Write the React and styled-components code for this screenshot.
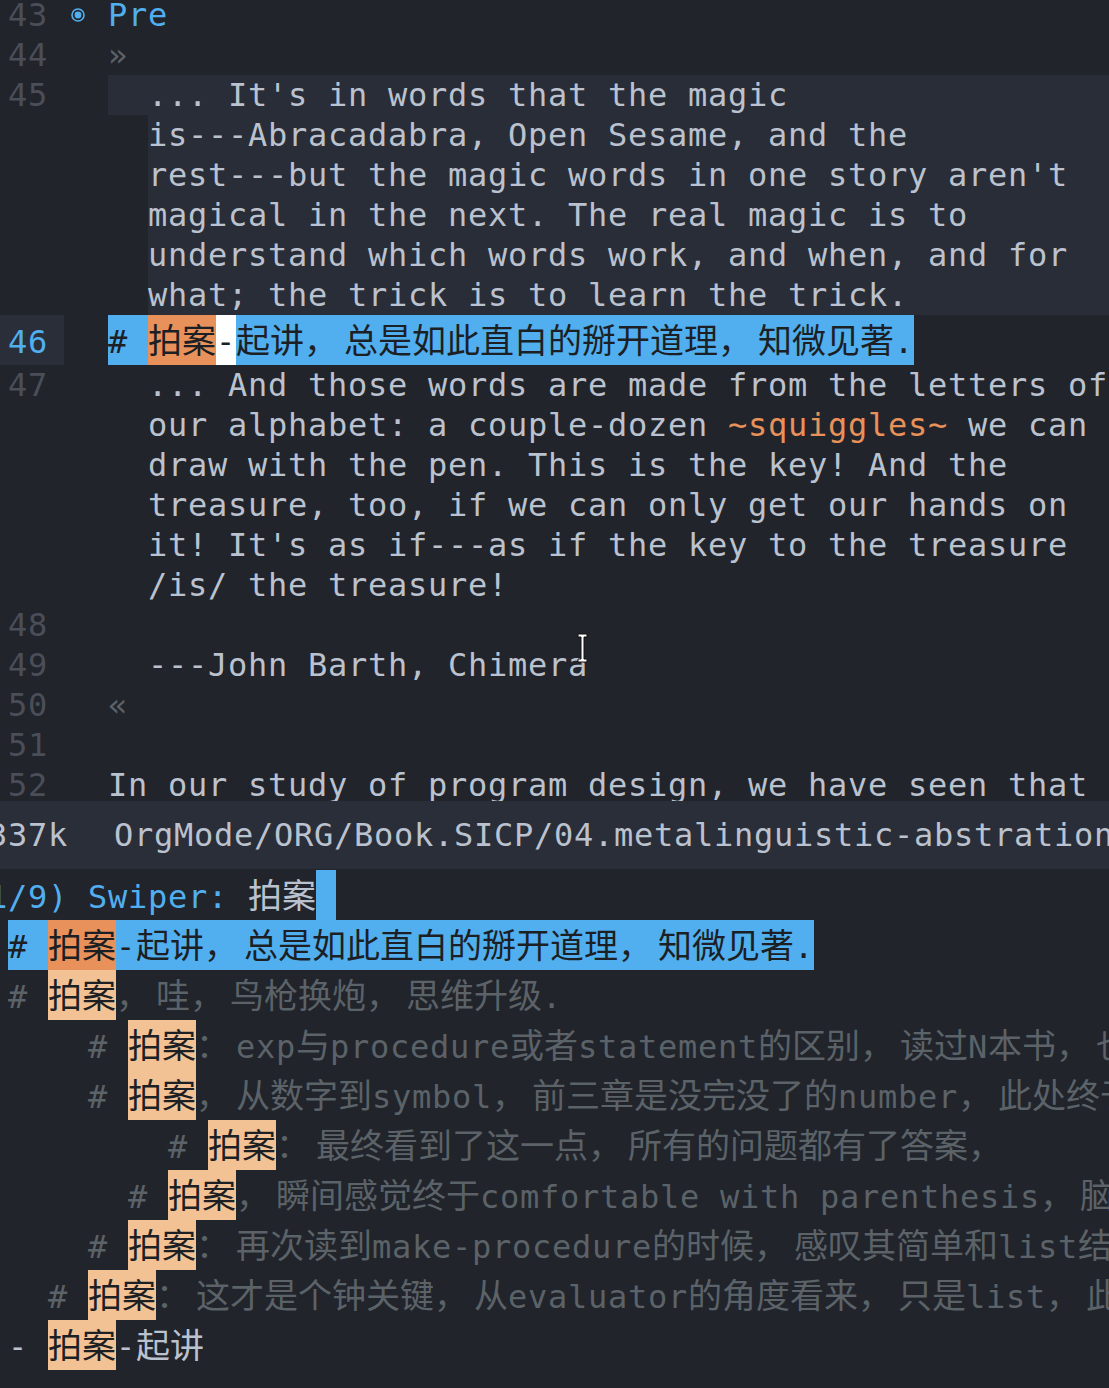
import React from 'react';
import styled, { createGlobalStyle } from 'styled-components';

const bg = '#21242b';
const bgBlock = '#292d37';
const bgModeLine = '#2a2e38';
const fg = '#bbc2cf';
const dim = '#5b6268';
const lineNum = '#4a4e58';
const blue = '#51afef';
const orange = '#e8915a';
const peach = '#f3c294';
const ink = '#1c1f24';

const GlobalStyle = createGlobalStyle`
  html, body {
    margin: 0;
    padding: 0;
    background: ${bg};
    overflow: hidden;
  }
`;

// CJK runs get their own font and size, fullwidth punctuation takes two cells
const CJK_SPLIT = /([\u4e00-\u9fff]+|[\uff0c\uff1a\u3001\u3002])/;
const PUNCT = /^[\uff0c\uff1a\u3001\u3002]$/;

function Mixed({ text }) {
  return text.split(CJK_SPLIT).map((part, i) => {
    if (!part) return null;
    if (PUNCT.test(part)) return <Punct key={i}>{part}</Punct>;
    if (/^[\u4e00-\u9fff]/.test(part)) return <Han key={i}>{part}</Han>;
    return <React.Fragment key={i}>{part}</React.Fragment>;
  });
}

function Bullet() {
  return (
    <BulletCell>
      <svg width="14" height="14" viewBox="0 0 14 14">
        <circle cx="7" cy="7" r="6" fill="none" stroke={blue} strokeWidth="1.6" />
        <circle cx="7" cy="7" r="3.4" fill={blue} />
      </svg>
    </BulletCell>
  );
}

function IBeam() {
  return (
    <MousePointer width="11" height="30" viewBox="0 0 11 30">
      <path
        d="M1 1h9v3H7v22h3v3H1v-3h3V4H1z"
        fill="#fff"
        stroke="#111"
        strokeWidth="1"
      />
    </MousePointer>
  );
}

function BufLine({ num, current, tall, indent = 2, block, children }) {
  return (
    <Row $tall={tall}>
      <Gutter $current={current}>{num}</Gutter>
      <Content $indent={indent}>
        <Inner $block={block}>{children}</Inner>
      </Content>
    </Row>
  );
}

function Candidate({ indent = 0, mark = '#', rest, tone = 'dim' }) {
  return (
    <CandRow $indent={indent}>
      <CandText $tone={tone}>
        {mark}{' '}
        <Match $strong={tone === 'selected'}>
          <Han>拍案</Han>
        </Match>
        <Mixed text={rest} />
      </CandText>
    </CandRow>
  );
}

const quote = [
  'is---Abracadabra, Open Sesame, and the',
  "rest---but the magic words in one story aren't",
  'magical in the next. The real magic is to',
  'understand which words work, and when, and for',
  'what; the trick is to learn the trick.',
];

const candidates = [
  { indent: 0, rest: '，哇，鸟枪换炮，思维升级.' },
  { indent: 4, rest: '：exp与procedure或者statement的区别，读过N本书，也' },
  { indent: 4, rest: '，从数字到symbol，前三章是没完没了的number，此处终于' },
  { indent: 8, rest: '：最终看到了这一点，所有的问题都有了答案，' },
  { indent: 6, rest: '，瞬间感觉终于comfortable with parenthesis，脑' },
  { indent: 4, rest: '：再次读到make-procedure的时候，感叹其简单和list结' },
  { indent: 2, rest: '：这才是个钟关键，从evaluator的角度看来，只是list，此' },
];

export default function App() {
  return (
    <Frame>
      <GlobalStyle />
      <Buffer>
        <BufLine num="43" indent={0}>
          <Bullet />
          <Heading>Pre</Heading>
        </BufLine>
        <BufLine num="44">
          <Faint>»</Faint>
        </BufLine>
        <BufLine num="45" block>
          {"  ... It's in words that the magic"}
        </BufLine>
        {quote.map((t) => (
          <BufLine key={t} indent={4} block>
            {t}
          </BufLine>
        ))}
        <BufLine num="46" current tall>
          <Seg $bg={blue} $color={ink}>
            {'# '}
            <Seg $bg={orange}>
              <Han>拍案</Han>
            </Seg>
            <Seg $bg="#ffffff">-</Seg>
            <Mixed text="起讲，总是如此直白的掰开道理，知微见著." />
          </Seg>
        </BufLine>
        <BufLine num="47">{'  ... And those words are made from the letters of'}</BufLine>
        <BufLine indent={4}>
          {'our alphabet: a couple-dozen '}
          <Verbatim>~squiggles~</Verbatim>
          {' we can'}
        </BufLine>
        <BufLine indent={4}>draw with the pen. This is the key! And the</BufLine>
        <BufLine indent={4}>treasure, too, if we can only get our hands on</BufLine>
        <BufLine indent={4}>{"it! It's as if---as if the key to the treasure"}</BufLine>
        <BufLine indent={4}>/is/ the treasure!</BufLine>
        <BufLine num="48" />
        <BufLine num="49">{'  ---John Barth, Chimera'}</BufLine>
        <BufLine num="50">
          <Faint>«</Faint>
        </BufLine>
        <BufLine num="51" />
        <BufLine num="52">In our study of program design, we have seen that</BufLine>
        <IBeam />
      </Buffer>

      <ModeLine>
        <BufferSize>337k</BufferSize>
        <FilePath>OrgMode/ORG/Book.SICP/04.metalinguistic-abstration.org</FilePath>
      </ModeLine>

      <Minibuffer>
        <PromptRow>
          <PromptLabel>(1/9) Swiper: </PromptLabel>
          <Han>拍案</Han>
          <InputCursor />
        </PromptRow>
        <Candidate tone="selected" rest="-起讲，总是如此直白的掰开道理，知微见著." />
        {candidates.map((c) => (
          <Candidate key={c.rest} indent={c.indent} rest={c.rest} />
        ))}
        <Candidate tone="plain" mark="-" rest="-起讲" />
      </Minibuffer>
    </Frame>
  );
}

const Frame = styled.div`
  width: 1109px;
  height: 1388px;
  display: flex;
  flex-direction: column;
  overflow: hidden;
  background: ${bg};
  color: ${fg};
  font-family: 'DejaVu Sans Mono', 'Noto Sans CJK SC', monospace;
  font-size: 32px;
  letter-spacing: 0.734px;
`;

const Buffer = styled.div`
  position: relative;
  flex: none;
  height: 806px;
  margin-top: -5px;
  overflow: hidden;
`;

const Row = styled.div`
  display: flex;
  height: ${(p) => (p.$tall ? 50 : 40)}px;
  line-height: ${(p) => (p.$tall ? 54 : 40)}px;
`;

const Gutter = styled.div`
  flex: none;
  box-sizing: border-box;
  width: 64px;
  margin-right: 4px;
  padding-right: 16px;
  text-align: right;
  color: ${(p) => (p.$current ? blue : lineNum)};
  background: ${(p) => (p.$current ? bgModeLine : 'transparent')};
`;

const Content = styled.div`
  flex: 1;
  min-width: 0;
  padding-left: ${(p) => p.$indent * 20}px;
  overflow: hidden;
`;

const Inner = styled.div`
  height: 100%;
  white-space: pre;
  background: ${(p) => (p.$block ? bgBlock : 'transparent')};
`;

const Han = styled.span`
  font-family: 'Noto Sans CJK SC', sans-serif;
  font-size: 34px;
  letter-spacing: 0;
  line-height: 1;
`;

const Punct = styled(Han)`
  display: inline-block;
  width: 40px;
  text-align: left;
`;

const Seg = styled.span`
  display: inline-block;
  vertical-align: top;
  height: 100%;
  background: ${(p) => p.$bg};
  color: ${(p) => p.$color || 'inherit'};
`;

const BulletCell = styled.span`
  display: inline-flex;
  align-items: center;
  vertical-align: top;
  box-sizing: border-box;
  width: 40px;
  height: 100%;
  padding-left: 3px;
`;

const Heading = styled.span`
  color: ${blue};
`;

const Faint = styled.span`
  color: ${dim};
`;

const Verbatim = styled.span`
  color: ${orange};
`;

const MousePointer = styled.svg`
  position: absolute;
  left: 577px;
  top: 638px;
`;

const ModeLine = styled.div`
  flex: none;
  height: 68px;
  line-height: 68px;
  background: ${bgModeLine};
  white-space: pre;
  overflow: hidden;
`;

const BufferSize = styled.span`
  display: inline-block;
  margin-left: -12px;
`;

const FilePath = styled.span`
  margin-left: 46px;
`;

const Minibuffer = styled.div`
  flex: none;
  display: flex;
  flex-direction: column;
  padding-top: 1px;
`;

const PromptRow = styled.div`
  height: 50px;
  line-height: 54px;
  margin-left: -32px;
  white-space: pre;
`;

const PromptLabel = styled.span`
  color: ${blue};
`;

const InputCursor = styled.span`
  display: inline-block;
  vertical-align: top;
  width: 20px;
  height: 50px;
  background: ${blue};
`;

const CandRow = styled.div`
  height: 50px;
  line-height: 54px;
  padding-left: ${(p) => 8 + p.$indent * 20}px;
  white-space: pre;
  overflow: hidden;
`;

const toneColor = { selected: ink, dim, plain: fg };

const CandText = styled.span`
  display: inline-block;
  vertical-align: top;
  height: 100%;
  color: ${(p) => toneColor[p.$tone]};
  background: ${(p) => (p.$tone === 'selected' ? blue : 'transparent')};
`;

const Match = styled.span`
  display: inline-block;
  vertical-align: top;
  height: 100%;
  color: ${ink};
  background: ${(p) => (p.$strong ? orange : peach)};
`;
